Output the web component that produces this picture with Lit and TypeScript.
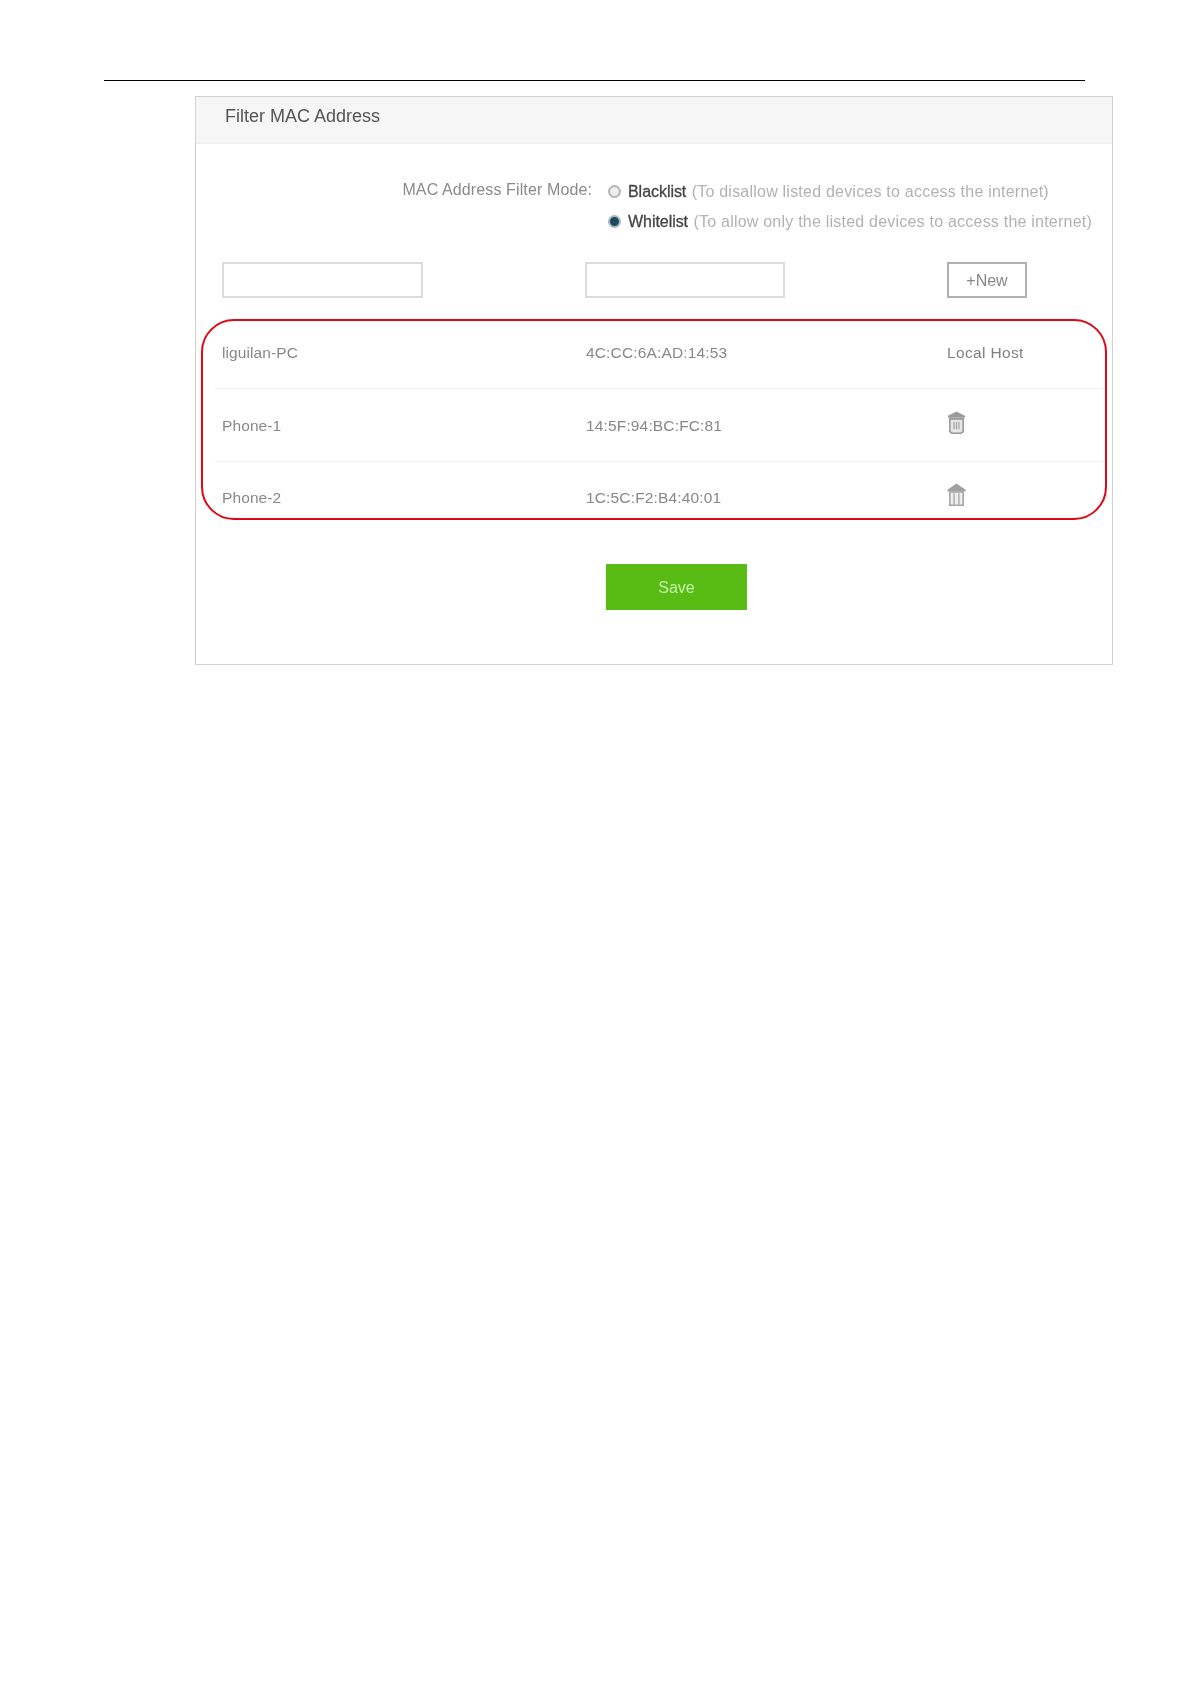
import { LitElement, html, svg, css } from "lit";
import { customElement } from "lit/decorators.js";

const rows = [
  { name: "liguilan-PC", mac: "4C:CC:6A:AD:14:53", local: true },
  { name: "Phone-1", mac: "14:5F:94:BC:FC:81", local: false },
  { name: "Phone-2", mac: "1C:5C:F2:B4:40:01", local: false },
];

const trash = (open: boolean) => html`<svg class="trash" viewBox="1.500 1.500 15 19" width="19" height="23" aria-hidden="true">
  ${open
    ? svg`<path d="M2 5.500 9 2l7 3.500V7H2z" fill="#9a9a9a"/>
        <path d="M3.500 8h11v10.500L12.500 20h-7l-2-1.500z" fill="#e6e6e6" stroke="#989898" stroke-width="1.300"/>
        <path d="M7 10.500v6M9 10.500v6M11 10.500v6" stroke="#a5a5a5" stroke-width="1"/>`
    : svg`<path d="M1.500 7 9 2l7.500 5v1.500h-15z" fill="#a0a0a0"/>
        <path d="M3.500 9h11v11h-11z" fill="#eeeeee" stroke="#a5a5a5" stroke-width="1.300"/>
        <path d="M7 10v10M11 10v10" stroke="#adadad" stroke-width="1.200"/>`}
</svg>`;

@customElement("app-root")
export class AppRoot extends LitElement {
  static styles = css`
    :host {
      display: block;
      min-height: 1684px;
      background: #fff;
      font-family: "Liberation Sans", Arial, sans-serif;
      box-sizing: border-box;
      padding-top: 80px;
    }
    .rule {
      height: 1px;
      margin: 0 106px 0 104px;
      background: #000;
    }
    .card {
      position: relative;
      box-sizing: border-box;
      width: 918px;
      height: 569px;
      margin: 15px 0 0 195px;
      border: 1px solid #d2d2d2;
      filter: blur(0.5px);
    }
    .head {
      height: 47px;
      background: #f6f6f6;
      border-bottom: 1px solid #f0f0f0;
      box-sizing: border-box;
      padding: 8px 0 0 29px;
      font-size: 18px;
      line-height: 23px;
      color: #555;
    }
    .mode {
      display: grid;
      grid-template-columns: 396px auto;
      column-gap: 16px;
      margin-top: 38px;
    }
    .mode-label {
      justify-self: end;
      font-size: 16px;
      line-height: 20px;
      color: #8a8a8a;
      letter-spacing: 0.12px;
      margin-top: -2px;
    }
    .opts {
      display: flex;
      flex-direction: column;
      gap: 10px;
    }
    .opt {
      display: flex;
      align-items: center;
      gap: 7px;
      height: 20px;
      font-size: 16px;
      white-space: nowrap;
    }
    .radio {
      box-sizing: border-box;
      width: 13px;
      height: 13px;
      margin-top: -1px;
      border-radius: 50%;
      border: 2px solid #b5b5b5;
      background: #eee;
      flex: none;
    }
    .radio.on {
      border-color: #a9b8bf;
      background: #1c4a5e;
    }
    .opt b {
      font-weight: 400;
      color: #444;
      letter-spacing: -0.05px;
      -webkit-text-stroke: 0.3px #444;
    }
    .opt span {
      color: #b2b2b2;
      letter-spacing: 0.22px;
      margin-left: 1px;
    }
    .form,
    .row {
      display: grid;
      grid-template-columns: 363px 362px 1fr;
      padding-left: 26px;
    }
    .form {
      margin-top: 30px;
      height: 36px;
    }
    .box {
      box-sizing: border-box;
      width: 201px;
      height: 36px;
      border: 2px solid #dcdcdc;
      background: #fff;
    }
    .form > .box:nth-child(2) {
      width: 200px;
    }
    .new {
      box-sizing: border-box;
      width: 80px;
      height: 36px;
      padding-top: 2px;
      border: 2px solid #b0b0b0;
      display: flex;
      align-items: center;
      justify-content: center;
      font-size: 16px;
      color: #888;
    }
    .list {
      margin: 18px 8px 0 18px;
    }
    .row {
      padding: 2px 0 0 8px;
      height: 73px;
      box-sizing: border-box;
      align-items: center;
      font-size: 15.500px;
      letter-spacing: 0.1px;
      color: #888;
      border-bottom: 1px solid #f3f3f3;
    }
    .row:last-child {
      border-bottom: none;
      height: 70px;
    }
    .row .mac {
      padding-left: 1px;
      letter-spacing: 0.15px;
    }
    .row .host {
      color: #808080;
      letter-spacing: 0.35px;
    }
    .trash {
      display: block;
      margin-top: -7px;
    }
    .save-wrap {
      margin: 32px 0 0 410px;
    }
    .save {
      box-sizing: border-box;
      width: 141px;
      height: 46px;
      padding-top: 2px;
      background: #58bc15;
      display: flex;
      align-items: center;
      justify-content: center;
      color: #c6f2a6;
      font-size: 16px;
    }
    .mark {
      position: absolute;
      left: 5px;
      top: 222px;
      width: 906px;
      height: 201px;
      box-sizing: border-box;
      border: 2px solid #dc0a18;
      border-radius: 33px;
      pointer-events: none;
    }
  `;

  render() {
    return html`
      <div class="rule"></div>
      <section class="card">
        <div class="head">Filter MAC Address</div>
        <div class="mode">
          <div class="mode-label">MAC Address Filter Mode:</div>
          <div class="opts">
            <div class="opt"><i class="radio"></i><div><b>Blacklist</b> <span>(To disallow listed devices to access the internet)</span></div></div>
            <div class="opt"><i class="radio on"></i><div><b>Whitelist</b> <span>(To allow only the listed devices to access the internet)</span></div></div>
          </div>
        </div>
        <div class="form">
          <div class="box"></div>
          <div class="box"></div>
          <div class="new">+New</div>
        </div>
        <div class="list">
          ${rows.map(
            (r, i) => html`<div class="row">
              <div>${r.name}</div>
              <div class="mac">${r.mac}</div>
              <div class="${r.local ? "host" : ""}">${r.local ? "Local Host" : trash(i === 1)}</div>
            </div>`
          )}
        </div>
        <div class="save-wrap"><div class="save">Save</div></div>
        <div class="mark"></div>
      </section>
    `;
  }
}
